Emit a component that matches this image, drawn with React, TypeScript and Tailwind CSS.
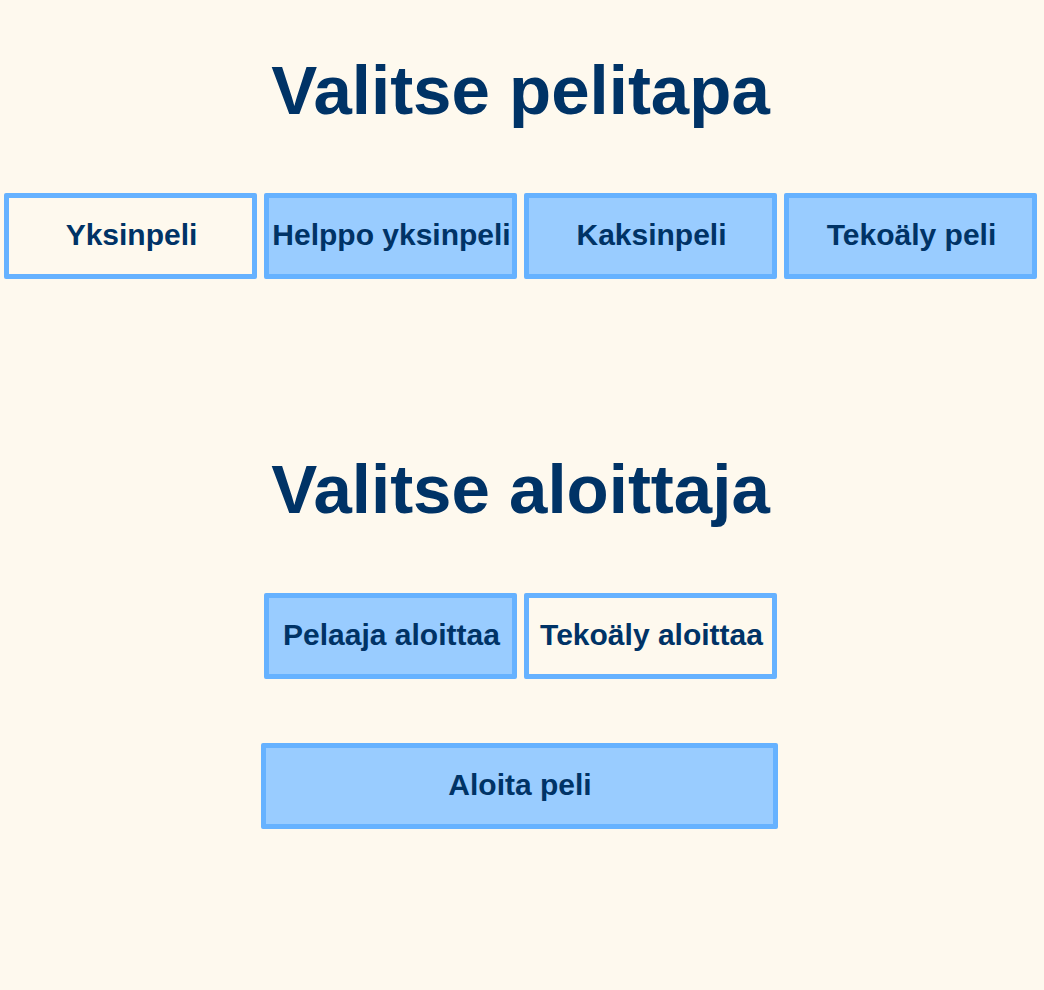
import { useState } from 'react';

const MODES = ['Yksinpeli', 'Helppo yksinpeli', 'Kaksinpeli', 'Tekoäly peli'];
const STARTERS = ['Pelaaja aloittaa', 'Tekoäly aloittaa'];

function ChoiceButton({ label, active, onClick, wide }: { label: string; active: boolean; onClick: () => void; wide?: boolean }) {
  return (
    <button
      onClick={onClick}
      className={`${wide ? 'w-[517px]' : 'w-[253px]'} h-[86px] border-[5px] border-[#66b2ff] rounded-[2px] pb-[3px] pl-[2px] text-[30px] font-bold text-[#003366] whitespace-nowrap ${active ? 'bg-transparent' : 'bg-[#99ccff]'}`}
    >
      {label}
    </button>
  );
}

export default function App() {
  const [mode, setMode] = useState('Yksinpeli');
  const [starter, setStarter] = useState('Tekoäly aloittaa');

  return (
    <div className="min-h-[990px] bg-[#fef9ee] flex flex-col items-center pt-[53px] pr-[3px] text-[#003366]" style={{ fontFamily: '"Liberation Sans", Arial, sans-serif' }}>
      <h1 className="text-[69px] leading-[76px] font-bold">Valitse pelitapa</h1>
      <div className="flex gap-[7px] mt-[64px]">
        {MODES.map(m => (
          <ChoiceButton key={m} label={m} active={mode === m} onClick={() => setMode(m)} />
        ))}
      </div>
      <h1 className="text-[69px] leading-[76px] font-bold mt-[173px]">Valitse aloittaja</h1>
      <div className="flex gap-[7px] mt-[65px]">
        {STARTERS.map(s => (
          <ChoiceButton key={s} label={s} active={starter === s} onClick={() => setStarter(s)} />
        ))}
      </div>
      <div className="mt-[64px] pr-[3px]">
        <ChoiceButton label="Aloita peli" active={false} onClick={() => {}} wide />
      </div>
    </div>
  );
}
